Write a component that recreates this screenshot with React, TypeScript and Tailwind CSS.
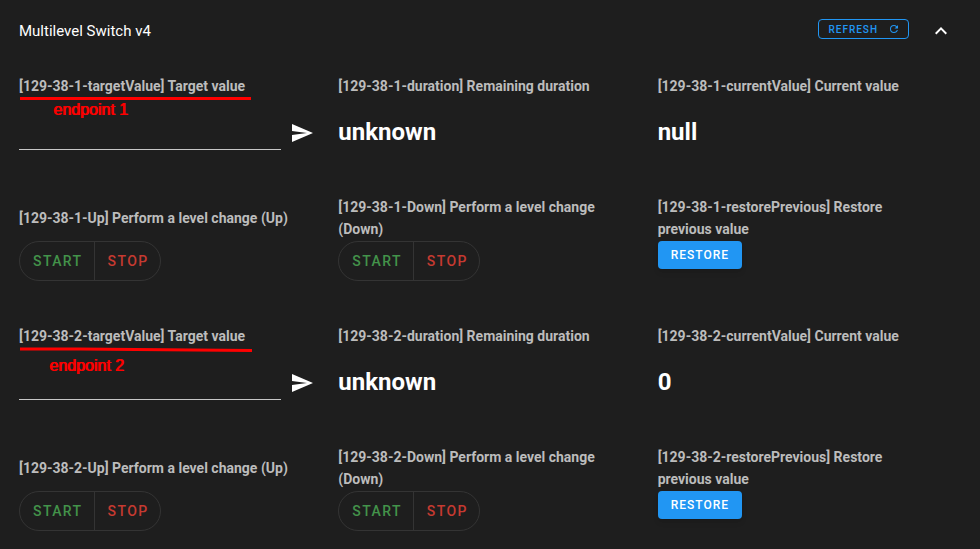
import { useState, type ReactNode } from "react";

interface Endpoint {
  id: number;
  currentValue: string;
  noteClass: string;
  line: string;
}

const ENDPOINTS: Endpoint[] = [
  {
    id: 1,
    currentValue: "null",
    noteClass: "pl-[34px]",
    line: "M1 3.5H232",
  },
  {
    id: 2,
    currentValue: "0",
    noteClass: "pt-[6px] pl-[30px]",
    line: "M1 4L60 4L117 4.5L233 5.5",
  },
];

const ICONS = {
  send: "M2,21L23,12L2,3V10L17,12L2,14V21Z",
  refresh:
    "M17.65,6.35C16.2,4.9 14.21,4 12,4A8,8 0 0,0 4,12A8,8 0 0,0 12,20C15.73,20 18.84,17.45 19.73,14H17.65C16.83,16.33 14.61,18 12,18A6,6 0 0,1 6,12A6,6 0 0,1 12,6C13.66,6 15.14,6.69 16.22,7.78L13,11H20V4L17.65,6.35Z",
  chevronUp: "M7.41,15.41L12,10.83L16.59,15.41L18,14L12,8L6,14L7.41,15.41Z",
};

export default function App() {
  const [open, setOpen] = useState(true);

  return (
    <main className="min-h-screen bg-[#1e1e1e] font-['Roboto',sans-serif] text-white">
      <header className="flex items-start justify-between pt-[19px] pl-[19px] pr-[27px]">
        <h1 className="text-[15px] leading-6">Multilevel Switch v4</h1>
        <div className="flex items-start gap-5">
          <button className="flex h-5 items-center gap-[10px] rounded border border-[#2196f3] pr-2 pl-[9px] text-[10px] font-medium tracking-[1px] text-[#2196f3]">
            REFRESH
            <Icon path={ICONS.refresh} className="size-3" />
          </button>
          <button
            aria-label="Toggle section"
            aria-expanded={open}
            onClick={() => setOpen(!open)}
          >
            <Icon path={ICONS.chevronUp} className="size-6" />
          </button>
        </div>
      </header>

      {open && (
        <div className="pt-5 pl-[7px] pr-[15px]">
          {ENDPOINTS.map((endpoint) => (
            <EndpointValues key={endpoint.id} endpoint={endpoint} />
          ))}
        </div>
      )}
    </main>
  );
}

function Icon({ path, className }: { path: string; className: string }) {
  return (
    <svg viewBox="0 0 24 24" fill="currentColor" className={className} aria-hidden="true">
      <path d={path} />
    </svg>
  );
}

function EndpointValues({ endpoint }: { endpoint: Endpoint }) {
  const prefix = `129-38-${endpoint.id}`;
  const inputId = `target-${endpoint.id}`;

  return (
    <section className="grid grid-cols-3 text-sm leading-[22px]">
      <div className="relative px-3 pt-3 pb-[34px]">
        <label htmlFor={inputId} className="block font-bold text-[#bcbcbc]">
          [{prefix}-targetValue] Target value
        </label>
        <div className="flex items-end gap-[9px] pt-[21px]">
          <input
            id={inputId}
            type="text"
            className="h-8 min-w-0 flex-1 border-b border-[#c7c7c7] bg-transparent text-base outline-none"
          />
          <button aria-label="Send" className="pb-[5px]">
            <Icon path={ICONS.send} className="size-6" />
          </button>
        </div>
        <Note endpoint={endpoint} />
      </div>
      <Reading label={`[${prefix}-duration] Remaining duration`} value="unknown" />
      <Reading
        label={`[${prefix}-currentValue] Current value`}
        value={endpoint.currentValue}
      />

      <Action label={`[${prefix}-Up] Perform a level change (Up)`}>
        <StartStop />
      </Action>
      <Action label={`[${prefix}-Down] Perform a level change (Down)`}>
        <StartStop />
      </Action>
      <Action label={`[${prefix}-restorePrevious] Restore previous value`}>
        <button className="h-7 rounded bg-[#2196f3] px-[13px] text-xs font-medium tracking-[1px] text-white shadow-md">
          RESTORE
        </button>
      </Action>
    </section>
  );
}

// Red marker line under the label, with the endpoint number below it
function Note({ endpoint }: { endpoint: Endpoint }) {
  return (
    <div className="pointer-events-none absolute top-8 left-3 font-['Liberation_Sans',sans-serif] text-base leading-4 text-[#f00] [text-shadow:1px_0_#f00]">
      <svg width="240" height="7" fill="none" stroke="currentColor" strokeWidth="3">
        <path d={endpoint.line} />
      </svg>
      <p className={endpoint.noteClass}>endpoint {endpoint.id}</p>
    </div>
  );
}

function Reading({ label, value }: { label: string; value: string }) {
  return (
    <div className="px-3 pt-3">
      <p className="font-bold text-[#bcbcbc]">{label}</p>
      <p className="pt-[19px] text-2xl leading-8 font-bold">{value}</p>
    </div>
  );
}

function Action({ label, children }: { label: string; children: ReactNode }) {
  return (
    <div className="px-3 pt-3 pb-8">
      <div className="flex min-h-11 items-center pr-5">
        <p className="font-bold text-[#bcbcbc]">{label}</p>
      </div>
      <div className="flex pt-px">{children}</div>
    </div>
  );
}

function StartStop() {
  return (
    <div className="flex h-10 divide-x divide-[#343434] rounded-full border border-[#343434] text-sm font-medium tracking-widest">
      <button className="pr-[11px] pl-[13px] text-[#43934a]">START</button>
      <button className="pr-[11px] pl-[13px] text-[#c63a31]">STOP</button>
    </div>
  );
}
